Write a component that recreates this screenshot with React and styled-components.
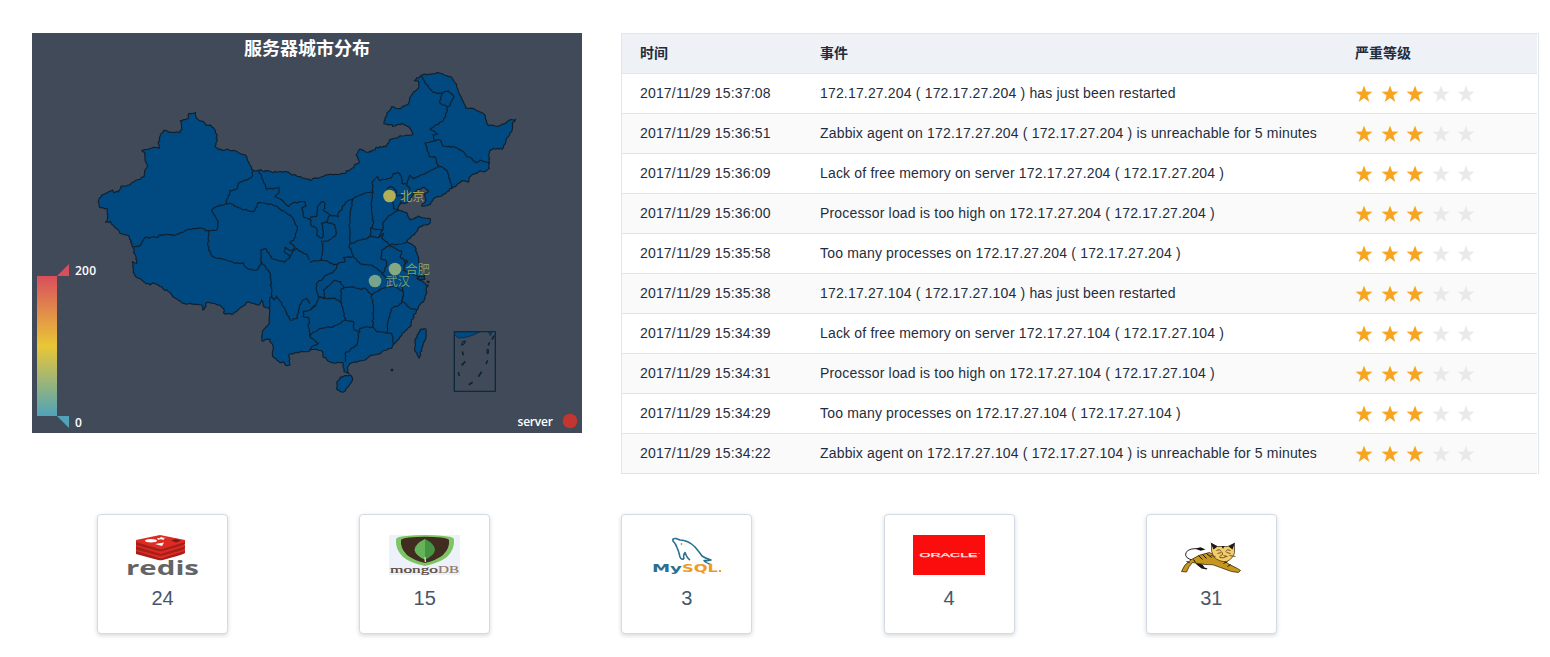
import React from "react";
import styled, { createGlobalStyle } from "styled-components";

const GlobalStyle = createGlobalStyle`
  body {
    margin: 0;
    background: #fff;
    overflow: hidden;
    font-family: "Liberation Sans", "Noto Sans CJK SC", sans-serif;
    font-size: 14px;
    color: #1f2d3d;
  }
`;

const Page = styled.main`
  box-sizing: border-box;
  width: 1550px;
  height: 657px;
  padding: 33px 11px 0 32px;
`;

const TopRow = styled.section`
  display: flex;
  align-items: flex-start;
  gap: 39px;
`;

const MapPanel = styled.figure`
  flex: none;
  margin: 0;
  width: 550px;
  height: 400px;
  background: #404a59;
  svg {
    display: block;
  }
`;

const EventTable = styled.div`
  box-sizing: border-box;
  width: 918px;
  height: 441px;
  border: 1px solid #dfe6ec;
  border-bottom-width: 0;
  padding-right: 1px;
`;

const Row = styled.div`
  box-sizing: border-box;
  display: grid;
  grid-template-columns: 180px 535px 1fr;
  align-items: center;
  height: 40px;
  border-bottom: 1px solid #dfe6ec;
  background: ${(p) => (p.$head ? "#eef1f6" : p.$striped ? "#fafafa" : "#fff")};
  font-weight: ${(p) => (p.$head ? 700 : 400)};
`;

const Cell = styled.div`
  padding: 0 0 2px 18px;
  line-height: 20px;
  white-space: nowrap;
  letter-spacing: ${(p) => p.$spacing || 0}px;
`;

const Stars = styled.div`
  display: flex;
  gap: 7.5px;
  padding: 1px 0 0 18px;
`;

const CardRow = styled.section`
  display: flex;
  gap: 131.2px;
  padding: 40px 0 0 65px;
`;

const Card = styled.article`
  box-sizing: border-box;
  flex: none;
  display: flex;
  flex-direction: column;
  align-items: center;
  width: 131px;
  height: 120px;
  padding-top: 20px;
  border: 1px solid #d1dbe5;
  border-radius: 4px;
  background: #fff;
  box-shadow: 0 2px 4px rgba(0, 0, 0, 0.12), 0 0 6px rgba(0, 0, 0, 0.04);
`;

const LogoBox = styled.div`
  display: flex;
  justify-content: center;
  height: 40px;
  svg {
    display: block;
    overflow: visible;
  }
`;

const Count = styled.span`
  margin-top: 11px;
  font-size: 20px;
  line-height: 24px;
  color: #475669;
`;

/* Adds a small, repeatable coastline roughness between two control points. */
function rough(points, closed) {
  let seed = 7;
  const rand = () => {
    seed = (seed * 16807) % 2147483647;
    return seed / 2147483647 - 0.5;
  };
  const p = points.trim().split(/\s+/).map((s) => s.split(",").map(Number));
  if (closed) p.push(p[0]);
  let d = `M${p[0]}`;
  for (let i = 1; i < p.length; i++) {
    const [ax, ay] = p[i - 1];
    const [bx, by] = p[i];
    const len = Math.hypot(bx - ax, by - ay);
    const n = Math.max(1, Math.round(len / 6));
    for (let k = 1; k < n; k++) {
      const t = k / n;
      d += `L${(ax + (bx - ax) * t + rand() * 5).toFixed(1)},${(ay + (by - ay) * t + rand() * 5).toFixed(1)}`;
    }
    d += `L${bx},${by}`;
  }
  return d + (closed ? "Z" : "");
}

const shift = (points, dx, dy) =>
  points.trim().split(/\s+/).map((s) => {
    const [x, y] = s.split(",").map(Number);
    return `${x + dx},${y + dy}`;
  }).join(" ");

const NORTH_WEST = `25,425 35,405 68,390 72,398 85,395 93,378 108,378 162,350 165,330 173,318 165,300 165,278 155,272 190,262 208,265 205,245 220,212 270,218 275,210 271,182 295,175 297,160 317,158 318,172 345,190 370,203 380,222 380,245 375,260 385,268 430,271 470,290 480,315 490,331 505,331 545,336 590,335 620,348 650,357`;
const NORTH_EAST = `0,362 45,345 100,340 125,325 148,305 138,285 148,268 175,277 195,270 200,262 228,260 240,238 275,228 308,225 300,205 275,190 255,198 222,192 228,170 245,140 265,146 295,132 305,105 325,85 327,68 313,62 335,45 380,38 425,52 440,75 447,100 460,125 466,143 495,148 525,165 535,197 570,197 600,180 617,178 607,192 605,215 590,235 577,268 550,265 538,275 538,325 525,335 510,332 480,350 475,367 455,362 440,375 425,385 395,408 375,413 355,435 335,438 348,420 342,405 355,395 345,383 325,388 308,405 290,428 268,435 265,450 290,458 300,480 325,468 362,478 360,490 330,500`;
const SOUTH_EAST = `300,55 290,65 315,80 325,110 330,140 345,165 345,178 320,175 345,190 352,200 345,235 320,270 305,300 303,318 270,350 252,372 245,385 215,397 180,408 165,420 118,432 112,442 118,462 102,455 100,430 65,428 40,412 38,395 20,388`;
const SOUTH_WEST = `640,395 598,402 600,435 585,435 580,425 570,428 548,410 550,385 540,358 515,362 520,330 538,310 538,265 522,260 515,240 508,255 475,245 440,275 430,282 404,282 400,265 385,255 350,248 343,268 338,270 335,255 280,250 262,238 240,218 190,188 180,195 137,170 130,150 127,125 140,130 130,85 118,50 90,40 78,25 62,5 46,7 52,0 50,-35 30,-37`;

const MAINLAND = [
  NORTH_WEST,
  shift(NORTH_EAST, 660, 0),
  shift(SOUTH_EAST, 660, 480),
  shift(SOUTH_WEST, 0, 480),
].join(" ");

const WEST_BORDERS = [
  "490,331 485,352 445,370 438,388 420,392 408,430 370,445 365,452 385,485 380,510 355,512 355,570 370,590 430,608 460,608 475,628 500,630 512,615 515,605",
  "355,512 330,503 290,510 255,525 210,524 205,532 165,533 150,558 130,560",
  "408,430 425,432 455,448 490,455 505,428 545,433 570,447 605,470 622,505 612,540 600,550 615,563 605,572 585,562 585,578 600,590 610,570 620,565 650,582 658,600",
  "515,605 512,570 525,565 545,595 585,607 600,590",
  "508,331 520,365 530,388 567,382 565,400 555,410 575,420 595,440 610,428 645,425 648,438 635,445 640,470 660,480",
  "515,605 540,640 545,705 538,725 538,745",
  "545,705 552,720 560,708 580,740 600,780 622,775 625,750 635,725 650,715 660,730",
  "675,735 660,750 640,755 640,770 657,775 655,800 660,830",
];

const NORTH_BORDERS = [
  "0,470 20,470 22,440 35,425 45,430 40,450 60,465 85,470 85,460 110,425 130,415 140,410 165,400 190,395",
  "130,418 120,455 118,500 120,540 118,555",
  "60,465 50,485 35,490 40,520 35,535 20,525 20,505 5,498 0,475",
  "50,485 75,495 78,525 62,538 40,545",
  "190,395 183,430 185,460 190,490 182,505 182,530 120,552",
  "190,395 187,365 200,350 210,362 245,352 250,340 265,338 275,350 275,370 290,372 300,345 310,357 380,323 385,315",
  "290,372 300,385 290,400 310,402",
  "385,315 410,330 420,365 428,385",
  "385,315 375,290 358,290 345,250 375,240",
  "375,240 390,240 400,258 440,263 460,275 470,290 480,292 497,308 510,300 538,312",
  "375,240 370,225 383,222 375,215 360,208 400,180 412,150 412,140 390,130 395,100 370,98 345,70 335,48",
  "395,100 415,92 432,110 415,140",
  "230,385 245,380 258,390 258,405 248,425 250,445 265,450",
  "258,405 278,408 268,435",
  "265,450 235,468 218,490 218,510 182,505",
  "218,510 205,533 182,528",
];

const SOUTH_BORDERS = [
  "0,125 35,120 55,125 70,135 85,130 80,140 70,155 50,165 20,190 18,205 25,230 45,235 40,210 75,180 92,185 100,205",
  "35,120 38,85 35,60",
  "208,52 220,40 215,55 240,75 270,72 290,65",
  "118,75 130,110 150,132 185,135 215,158",
  "128,110 100,112 105,125 85,130",
  "240,75 215,90 212,115 230,125 225,150 215,160 230,175 235,200",
  "240,75 255,85 275,95 270,110 285,125 280,150 300,160 325,170 345,168",
  "300,160 290,185 275,200 280,215",
  "95,205 125,200 150,208 165,205 185,225",
  "185,225 215,205 235,200 255,200 280,215 275,250 245,265 235,300 230,335",
  "185,225 190,260 188,320 200,335 245,340 250,372",
  "275,240 300,265 320,270",
  "95,205 92,245 100,275 105,300 130,305 132,330 150,335 150,325 188,320",
  "0,345 30,325 70,320 105,300",
  "148,335 140,375 105,400 105,425",
  "25,230 40,235 75,235 95,250",
  "0,270 15,260 25,235",
  "0,345 5,355 25,370 5,380 0,390",
];

const CITIES = [
  { name: "北京", x: 357.5, y: 163, fill: "#b1b058", text: "#a6a150" },
  { name: "合肥", x: 363, y: 236, fill: "#86a982", text: "#829e6a" },
  { name: "武汉", x: 343, y: 248, fill: "#78a48c", text: "#749d80" },
];

function Borders({ lines, dx = 0, dy = 0 }) {
  return (
    <g transform={`translate(${dx} ${dy})`} fill="none">
      {lines.map((l) => <path key={l} d={rough(l)} />)}
    </g>
  );
}

function ServerMap() {
  return (
    <svg width="550" height="400" fontFamily='"Open Sans", "Noto Sans CJK SC", sans-serif'>
      <defs>
        <linearGradient id="heat" x1="0" y1="0" x2="0" y2="1">
          <stop offset="0" stopColor="#d94e5d" />
          <stop offset=".5" stopColor="#eac736" />
          <stop offset="1" stopColor="#50a3ba" />
        </linearGradient>
      </defs>
      <g transform="translate(58 27) scale(.33333)" fill="#004981" stroke="#11202d" strokeWidth="3.4" strokeLinejoin="round">
        <path d={rough(MAINLAND, true)} />
        <Borders lines={WEST_BORDERS} />
        <Borders lines={NORTH_BORDERS} dx={660} />
        <Borders lines={SOUTH_BORDERS} dx={660} dy={480} />
        <g transform="translate(660 480)">
          <path d={rough("95,470 122,465 128,478 115,500 98,517 80,508 80,488", true)} />
          <path d={rough("333,327 348,327 348,350 335,385 327,415 314,390 315,365 325,340", true)} />
          <path d="M244,448h4v4h-4zM352,184h5v3h-5zM351,195h4v2h-4zM283,122l6,-2 3,7 -6,3z" />
          <path d="M434,335H510Q475,355 444,354L434,344ZM535,335H546L541,347Z" stroke="#0b2b47" strokeWidth="2.5" />
          <path d="M457,365L467,363 462,373 455,376ZM531,388h4v12h-4z" strokeWidth="3" />
          <path
            d="M457,394l3,12M466,424l-11,12M445,457l3,11M488,487l-12,7M515,455l-10,15M533,421l-5,11M539,367l-4,9M552,347l-6,12"
            fill="none"
            stroke="#0d2436"
            strokeWidth="5"
          />
          <rect x="433" y="335" width="123" height="179" fill="none" stroke="#102a3d" strokeWidth="4" />
        </g>
      </g>
      <text x="275" y="22" textAnchor="middle" fill="#fff" fontSize="18" fontWeight="700">服务器城市分布</text>
      {CITIES.map((c) => (
        <g key={c.name}>
          <circle cx={c.x} cy={c.y} r="6.3" fill={c.fill} />
          <text x={c.x + 10.5} y={c.y + 5} fontSize="12.2" fill={c.text}>{c.name}</text>
        </g>
      ))}
      <rect x="5" y="243" width="20" height="140" fill="url(#heat)" />
      <path d="M25,243H37V231Z" fill="#d94e5d" />
      <path d="M25,383H37V395Z" fill="#50a3ba" />
      <g fill="#fff" fontSize="12" fontWeight="600">
        <text x="43" y="242" textLength="21">200</text>
        <text x="43" y="394">0</text>
        <text x="485.5" y="393" textLength="35.5">server</text>
      </g>
      <circle cx="538" cy="388" r="7.3" fill="#c23531" />
    </svg>
  );
}

function Star({ on }) {
  return (
    <svg width="18" height="18" viewBox="0 0 18 18">
      <path d="M9 .4 11.2 6.6 17.5 6.7 12.4 10.6 14.3 16.9 9 13.1 3.7 16.9 5.6 10.6 .5 6.7 6.8 6.6Z" fill={on ? "#f7a521" : "#e9e9e9"} />
    </svg>
  );
}

function RedisLogo() {
  return (
    <svg width="72" height="40" viewBox="0 0 72 40">
      {[12, 7.5, 3].map((y) => (
        <g key={y}>
          <path d={`M9,${y + 3}L34,${y + 11} 58,${y + 3}V${y + 6}Q58,${y + 7} 36,${y + 13} 34,${y + 13.5} 31,${y + 13}L9,${y + 7}Z`} fill="#a51e1a" />
          <path d={`M9,${y + 2}L33,${y - 3} 58,${y + 2}V${y + 4}L34,${y + 11.5} 9,${y + 4}Z`} fill="#dc2b22" />
        </g>
      ))}
      <ellipse cx="24" cy="5.8" rx="6" ry="1.7" fill="#fff" />
      <path d="M30,3 33,3.2 34,1.7 36,2.8 39,2.7 36.5,3.8 37,5 34,4.2 31,4.7ZM28,9 37,7.5 35,11Z" fill="#fff" />
      <path d="M44,5.5 49,4 54,5.6 49,7.4Z" fill="#811611" />
      <text x="-1" y="39.5" textLength="73" lengthAdjust="spacingAndGlyphs" fontFamily="Open Sans, sans-serif" fontWeight="700" fontSize="20" fill="#636466">redis</text>
    </svg>
  );
}

function MongoLogo() {
  return (
    <svg width="71" height="40" viewBox="0 0 71 40">
      <rect width="71" height="40" fill="#edf2fa" />
      <path d="M7,4Q8,1.5 17,1 36,-1 55,1 64,1.5 65,4 66,14 58,22 50,28 36,31 21,28 14,22 6,14 7,4Z" fill="#80c565" />
      <path d="M12,5Q13,3 20,2.4 36,1 52,2.4 59,3 60,5 61,13 54,20 48,25 36,28 24,25 18,20 11,13 12,5Z" fill="#412c20" />
      <path d="M36,4Q46,9 46,15 45,21 36,24.5 27,21 25.5,15 26,9 36,4Z" fill="#449443" />
      <path d="M36,4Q26,9 25.5,15 27,21 36,24.5Z" fill="#65b457" />
      <path d="M35.3,22h1.2l.6,5h-1.3z" fill="#dae8c9" />
      <text x="1" y="38" textLength="48" lengthAdjust="spacingAndGlyphs" fontFamily="Liberation Serif, serif" fontSize="9.5" stroke="#584437" strokeWidth=".2" fill="#584437">mongo</text>
      <text x="49" y="38" textLength="21" lengthAdjust="spacingAndGlyphs" fontFamily="Liberation Serif, serif" fontSize="9.5" stroke="#94795e" strokeWidth=".2" fill="#94795e">DB</text>
    </svg>
  );
}

function MysqlLogo() {
  return (
    <svg width="72" height="40" viewBox="0 0 72 40">
      <path
        d="M33,24Q29,25 28.5,20 28,17 26,12.5 25,9 22,6 21,3 25,3.5L29,5Q37,5 44,12 49,18 51,21 54,23 60,25 57,26 53,25.5 54,27.5 61,30M33,24Q32,20 34,17.5 36,23 39,25"
        fill="none"
        stroke="#28708f"
        strokeWidth="1.6"
        strokeLinejoin="round"
      />
      <circle cx="30.5" cy="9" r=".8" fill="#28708f" />
      <text x="1" y="37" textLength="30" lengthAdjust="spacingAndGlyphs" fontFamily="DejaVu Sans, sans-serif" fontWeight="700" fontSize="11" fill="#28708f">My</text>
      <text x="31" y="37" textLength="36" lengthAdjust="spacingAndGlyphs" fontFamily="DejaVu Sans, sans-serif" fontWeight="700" fontSize="11" fill="#ed9b26">SQL</text>
      <rect x="68" y="35" width="2" height="2" fill="#ed9b26" />
    </svg>
  );
}

function OracleLogo() {
  return (
    <svg width="72" height="40" viewBox="0 0 72 40">
      <rect width="72" height="40" fill="#fb0d0d" />
      <text x="6.5" y="22.3" textLength="58" lengthAdjust="spacingAndGlyphs" fontFamily="Liberation Sans, sans-serif" fontSize="6" stroke="#ffe5e5" strokeWidth=".25" fill="#ffe5e5">ORACLE</text>
      <rect x="65.5" y="18" width="1.2" height="1" fill="#ffb0b0" />
    </svg>
  );
}

function TomcatLogo() {
  return (
    <svg width="72" height="40" viewBox="-2.5 1.5 72 40">
      <path d="M17,27Q6,25 8.5,19 12,14 22,15.5" fill="none" stroke="#222" strokeWidth="1" />
      <path d="M18,15 23,13.8 28,16 23,17.3Z" fill="#111" />
      <path d="M18,29 25,31 27,34 30,35 29,36 24,35 19,31Z" fill="#161616" />
      <path d="M4,38Q6,31 14,26 21,21 32,19L46,27 52,31 60,35 63,37 61,39 54,38 43,34Q35,30 28,31 20,30 15,29 11,33 9,38.5Z" fill="#c7961f" stroke="#3b2a0b" strokeWidth=".8" />
      <path d="M21,22l4,4M25,21l4,4M29,20l5,4M16,26l2,3M12,29l-3,-1M46,30l4,-2M50,33l3,-2" stroke="#17120a" strokeWidth="1" />
      <path d="M34,10 40,13 50,13 57,10V19Q56,25 49,28 42,29 36,23 33,18 34,10Z" fill="#f4cc69" stroke="#322811" strokeWidth=".7" />
      <path d="M33,9 40,13 36,16ZM57.5,9 51,13 55,16ZM44,12.5h3l-1.5,3z" fill="#191919" />
      <path d="M39,17q3,-2 5,1M48,18q2,-3 5,-1M40,20l4,-1M49,19l4,1M45,19v2l-3,2M46,22l4,1M42,24q4,1 7,-1M33,22l5,1M52,22l6,1" fill="none" stroke="#49391b" strokeWidth=".8" />
    </svg>
  );
}

const restarted = (ip) => `${ip} ( ${ip} ) has just been restarted`;
const unreachable = (ip) => `Zabbix agent on ${ip} ( ${ip} ) is unreachable for 5 minutes`;
const memory = (ip) => `Lack of free memory on server ${ip} ( ${ip} )`;
const load = (ip) => `Processor load is too high on ${ip} ( ${ip} )`;
const processes = (ip) => `Too many processes on ${ip} ( ${ip} )`;

const HOST_A = "172.17.27.204";
const HOST_B = "172.17.27.104";

const EVENTS = [
  ["15:37:08", restarted(HOST_A)],
  ["15:36:51", unreachable(HOST_A)],
  ["15:36:09", memory(HOST_A)],
  ["15:36:00", load(HOST_A)],
  ["15:35:58", processes(HOST_A)],
  ["15:35:38", restarted(HOST_B)],
  ["15:34:39", memory(HOST_B)],
  ["15:34:31", load(HOST_B)],
  ["15:34:29", processes(HOST_B)],
  ["15:34:22", unreachable(HOST_B)],
];

const SERVICES = [
  [RedisLogo, 24],
  [MongoLogo, 15],
  [MysqlLogo, 3],
  [OracleLogo, 4],
  [TomcatLogo, 31],
];

export default function App() {
  return (
    <Page>
      <GlobalStyle />
      <TopRow>
        <MapPanel>
          <ServerMap />
        </MapPanel>
        <EventTable>
          <Row $head>
            <Cell>时间</Cell>
            <Cell>事件</Cell>
            <Cell>严重等级</Cell>
          </Row>
          {EVENTS.map(([time, message], i) => (
            <Row key={time} $striped={i % 2 === 1}>
              <Cell $spacing={0.17}>2017/11/29 {time}</Cell>
              <Cell $spacing={0.17}>{message}</Cell>
              <Stars>
                {[0, 1, 2, 3, 4].map((n) => <Star key={n} on={n < 3} />)}
              </Stars>
            </Row>
          ))}
        </EventTable>
      </TopRow>
      <CardRow>
        {SERVICES.map(([Logo, count]) => (
          <Card key={count}>
            <LogoBox>
              <Logo />
            </LogoBox>
            <Count>{count}</Count>
          </Card>
        ))}
      </CardRow>
    </Page>
  );
}
